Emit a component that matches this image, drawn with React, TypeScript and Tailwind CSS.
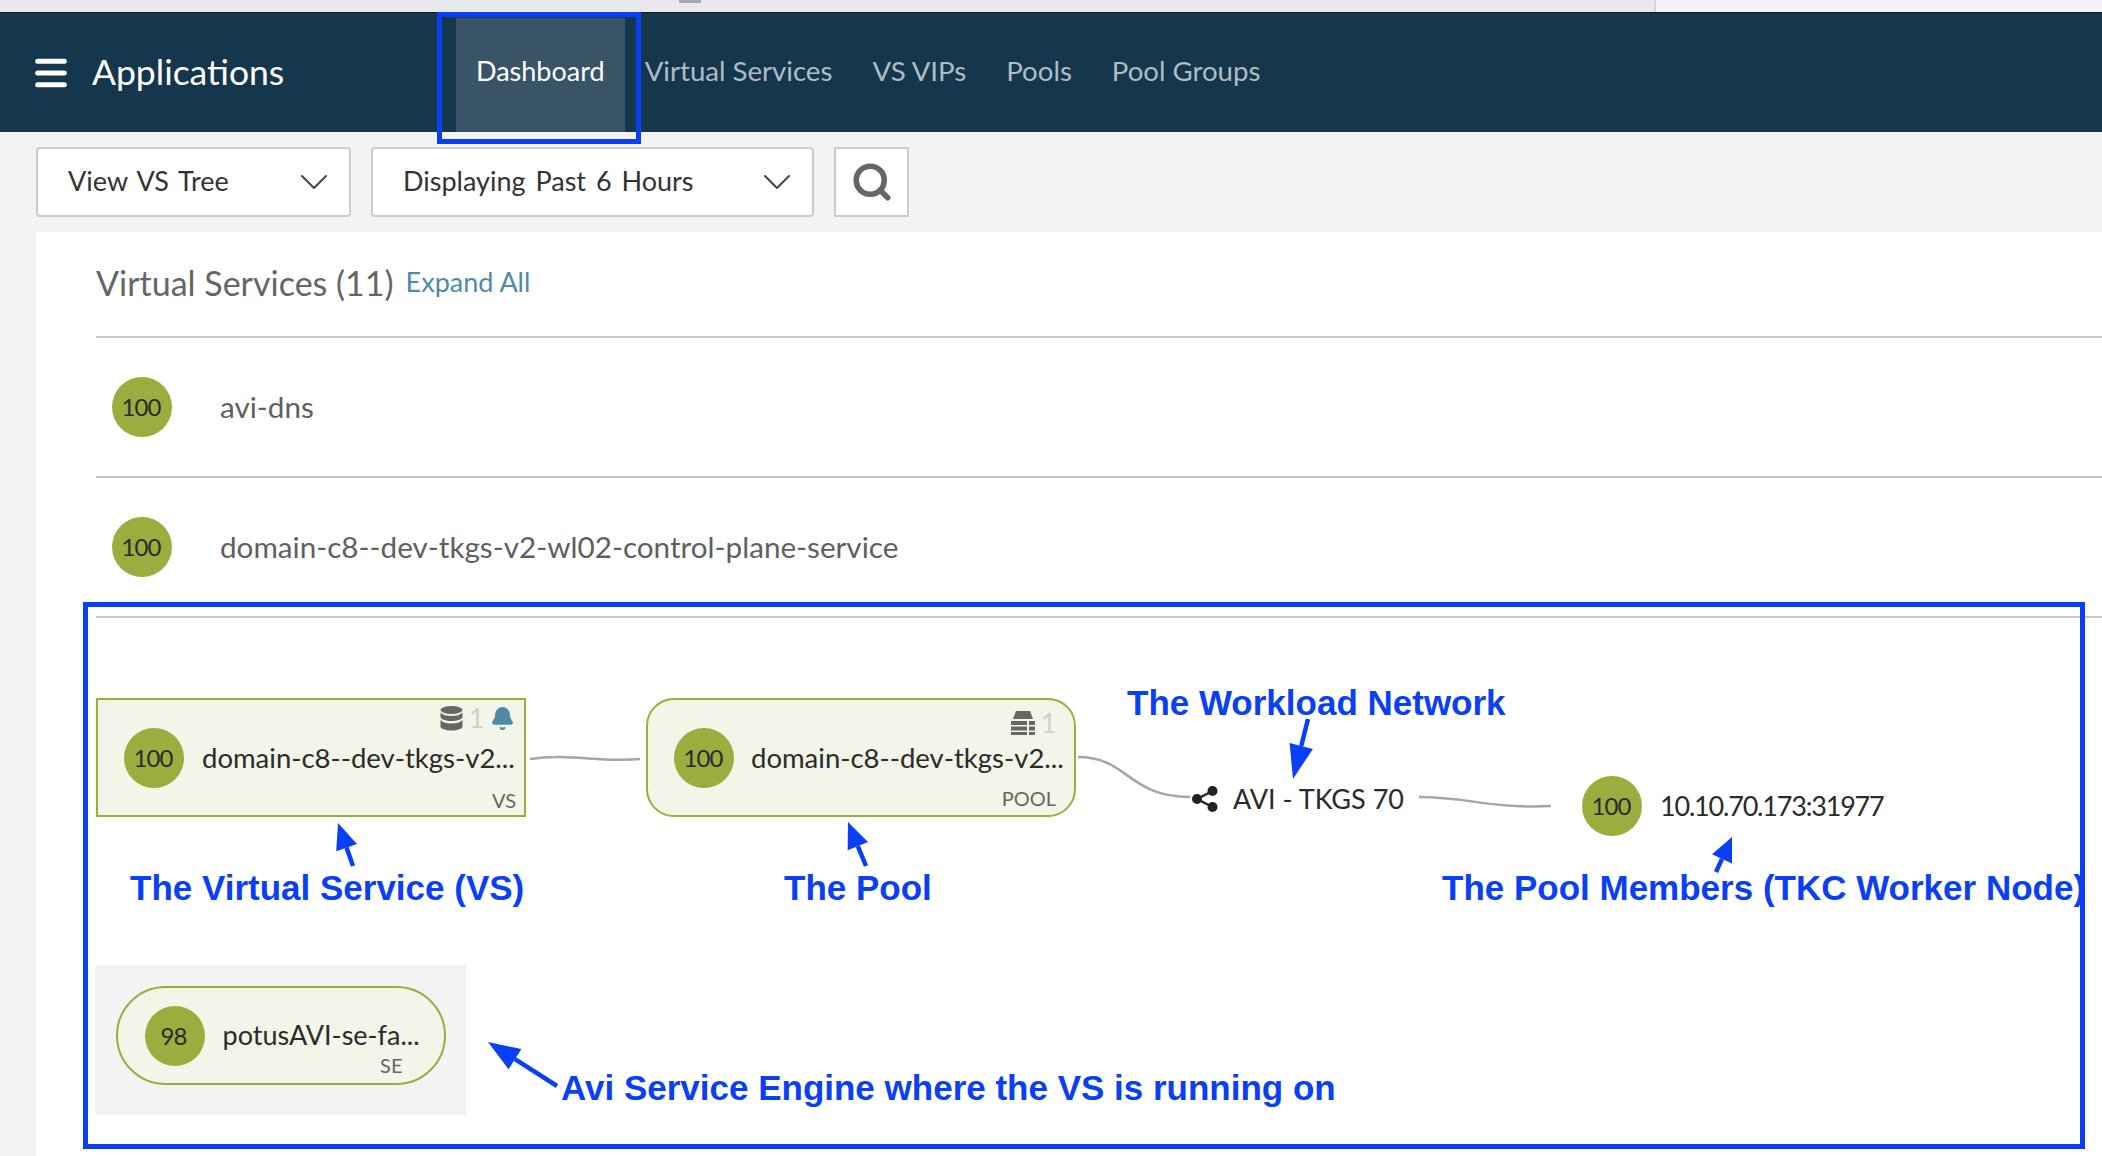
import { Menu, ChevronDown, Search, Bell } from "lucide-react";

const NAV = ["Virtual Services", "VS VIPs", "Pools", "Pool Groups"];

function Score({ value }: { value: number }) {
  return (
    <div className="flex h-[60px] w-[60px] shrink-0 items-center justify-center rounded-full bg-[#9aad3e] pr-[2px] text-[24px] tracking-[-1px] text-[#2b2b2b]">
      {value}
    </div>
  );
}

function Row({ name }: { name: string }) {
  return (
    <div className="flex h-[140px] items-center gap-12 border-b-2 border-[#c8c8c8] pl-4">
      <Score value={100} />
      <span className="text-[29.65px] text-[#5f5f5f]">{name}</span>
    </div>
  );
}

function Picker({ label, width, gap }: { label: string; width: string; gap: string }) {
  return (
    <div className={`flex h-[70px] items-center justify-between rounded border-2 border-[#cccccc] bg-white pl-[30px] pr-[11px] ${width} ${gap}`}>
      <span className="pb-[2px] text-[27px] [word-spacing:3px] text-[#333333]">{label}</span>
      <ChevronDown className="h-12 w-12 text-[#444444]" strokeWidth={1} />
    </div>
  );
}

function Database() {
  return (
    <svg width="23" height="25" viewBox="0 0 23 25" fill="#666666">
      <ellipse cx="11.5" cy="4" rx="11" ry="4" />
      <path d="M.5 6.5c2 2.400 6 3.500 11 3.500s9-1.100 11-3.500V11c0 2.200-5 4-11 4S.5 13.200.5 11z" />
      <path d="M.5 14c2 2.400 6 3.500 11 3.500s9-1.100 11-3.500v6.500c0 2.300-5 4-11 4s-11-1.700-11-4z" />
    </svg>
  );
}

function PoolIcon() {
  return (
    <svg width="24" height="24" viewBox="0 0 24 24" fill="#666666">
      <path d="M5 0h14l3 8H2z" />
      <path d="M0 10h16v4H0zM18 10h6v4h-6zM0 15.500h16v4H0zM18 15.500h6v4h-6zM0 21h16v3H0zM18 21h6v3h-6z" />
    </svg>
  );
}

function ShareIcon() {
  return (
    <svg width="26" height="26" viewBox="0 0 26 26" fill="#222222">
      <circle cx="20.500" cy="5" r="5" />
      <circle cx="5" cy="13" r="5" />
      <circle cx="20.500" cy="21" r="5" />
      <path d="M5 13 20.500 5M5 13l15.500 8" stroke="#222222" strokeWidth="2.500" />
    </svg>
  );
}

function Note({ x, y, text }: { x: string; y: string; text: string }) {
  return (
    <span className={`absolute whitespace-nowrap font-['Liberation_Sans',Arial,sans-serif] text-[35px] leading-[32px] font-bold text-[#0a40f5] ${x} ${y}`}>
      {text}
    </span>
  );
}

function Arrow({ x1, y1, x2, y2, head = 34, w = 13 }: { x1: number; y1: number; x2: number; y2: number; head?: number; w?: number }) {
  const len = Math.hypot(x2 - x1, y2 - y1);
  const ux = (x2 - x1) / len;
  const uy = (y2 - y1) / len;
  const bx = x2 - ux * head;
  const by = y2 - uy * head;
  return (
    <g>
      <line x1={x1} y1={y1} x2={bx} y2={by} stroke="#0a40f5" strokeWidth="4.500" />
      <polygon points={`${x2},${y2} ${bx - uy * w},${by + ux * w} ${bx + uy * w},${by - ux * w}`} fill="#0a40f5" />
    </g>
  );
}

export default function App() {
  return (
    <div className="relative h-[1156px] w-[2102px] overflow-hidden bg-[#f3f3f3] font-['Lato',sans-serif]">
      <div className="flex h-3 bg-[#e8e7ec]">
        <div className="ml-[679px] h-[3px] w-[22px] bg-[#a8a8b0]" />
        <div className="ml-auto w-[448px] border-l-2 border-[#d5d5d8] bg-[#f4f3f9]" />
      </div>

      <header className="flex h-[120px] items-center border-t border-[#0a1e2e] bg-[#14374d] pl-[31px]">
        <Menu className="h-10 w-10 text-white" strokeWidth={3} />
        <h1 className="ml-[21px] w-[364px] pb-[2px] text-[35.5px] text-white">Applications</h1>
        <nav className="flex h-full text-[27.6px] text-[#b0bbc3]">
          <a className="mt-[5px] flex items-center bg-[#385466] px-5 pb-[7px] text-[27px] text-white">Dashboard</a>
          {NAV.map((n) => (
            <a key={n} className="flex items-center px-5 pb-[3px]">{n}</a>
          ))}
        </nav>
      </header>

      <div className="flex h-[100px] items-start pt-[15px] pl-9">
        <Picker label="View VS Tree" width="w-[315px]" gap="mr-5" />
        <Picker label="Displaying Past 6 Hours" width="w-[443px]" gap="mr-5" />
        <div className="flex h-[70px] w-[75px] items-center justify-center border-2 border-[#cccccc] bg-white">
          <Search className="h-[42px] w-[42px] text-[#666666]" strokeWidth={3.200} />
        </div>
      </div>

      <main className="ml-9 h-[924px] bg-white pl-[60px]">
        <div className="flex h-[106px] items-center gap-3 border-b-2 border-[#c8c8c8] pb-[4px]">
          <h2 className="text-[34px] text-[#666666]">Virtual Services (11)</h2>
          <a className="text-[27px] text-[#4f8ba8]">Expand All</a>
        </div>
        <Row name="avi-dns" />
        <Row name="domain-c8--dev-tkgs-v2-wl02-control-plane-service" />

        <div className="relative h-[529px]">
          <div className="absolute top-[80px] left-0 flex h-[119px] w-[430px] items-center gap-[18px] border-2 border-[#9aad3e] bg-[#f3f5e8] pl-[26px]">
            <Score value={100} />
            <span className="text-[27.5px] text-[#2b2b2b]">domain-c8--dev-tkgs-v2...</span>
            <div className="absolute top-[5px] right-[9px] flex items-center gap-[6px] text-[26px] leading-none text-[#cfcfcf]">
              <Database />
              <span>1</span>
              <Bell className="h-[25px] w-[25px] fill-[#4f8ba8] text-[#4f8ba8]" />
            </div>
            <span className="absolute right-2 bottom-0 text-[20px] text-[#666666]">VS</span>
          </div>

          <div className="absolute top-[80px] left-[550px] flex h-[119px] w-[430px] items-center gap-[17px] rounded-[28px] border-2 border-[#9aad3e] bg-[#f3f5e8] pl-[26px]">
            <Score value={100} />
            <span className="text-[27.5px] text-[#2b2b2b]">domain-c8--dev-tkgs-v2...</span>
            <div className="absolute top-[10px] right-[18px] flex items-center gap-[6px] text-[26px] leading-none text-[#cfcfcf]">
              <PoolIcon />
              <span>1</span>
            </div>
            <span className="absolute right-[18px] bottom-[2px] text-[20px] text-[#666666]">POOL</span>
          </div>

          <div className="absolute top-[161px] left-[1096px] flex items-center gap-[15px]">
            <ShareIcon />
            <span className="text-[27px] text-[#2b2b2b]">AVI - TKGS 70</span>
          </div>

          <div className="absolute top-[158px] left-[1486px] flex items-center gap-[18px]">
            <Score value={100} />
            <span className="text-[27px] tracking-[-1.200px] text-[#2b2b2b]">10.10.70.173:31977</span>
          </div>

          <div className="absolute top-[347px] left-[-1px] flex h-[150px] w-[371px] justify-center bg-[#f3f3f3] pt-[21px]">
            <div className="relative flex h-[99px] w-[330px] items-center gap-[18px] rounded-[50px] border-2 border-[#9aad3e] bg-[#f3f5e8] pl-[27px]">
              <Score value={98} />
              <span className="text-[27px] text-[#2b2b2b]">potusAVI-se-fa...</span>
              <span className="absolute right-[41px] bottom-[3px] text-[20px] text-[#666666]">SE</span>
            </div>
          </div>
        </div>
      </main>

      <svg className="pointer-events-none absolute inset-0" width="2102" height="1156" fill="none">
        <path d="M530 759c40-6 70 4 110 0" stroke="#a6a6a6" strokeWidth="2.500" />
        <path d="M1078 757c50 0 50 40 112 40" stroke="#a6a6a6" strokeWidth="2.500" />
        <path d="M1419 797c50 0 70 12 132 9" stroke="#a6a6a6" strokeWidth="2.500" />
        <Arrow x1={353} y1={866} x2={338} y2={823} head={26} w={11} />
        <Arrow x1={866} y1={866} x2={848} y2={822} head={26} w={11} />
        <Arrow x1={1308} y1={719} x2={1293} y2={779} head={34} w={12} />
        <Arrow x1={1716} y1={872} x2={1732} y2={837} head={24} w={11} />
        <Arrow x1={557} y1={1086} x2={488} y2={1042} head={32} w={12} />
      </svg>

      <Note x="left-[1127px]" y="top-[687px]" text="The Workload Network" />
      <Note x="left-[130px]" y="top-[872px]" text="The Virtual Service (VS)" />
      <Note x="left-[784px]" y="top-[872px]" text="The Pool" />
      <Note x="left-[1442px]" y="top-[872px]" text="The Pool Members (TKC Worker Node)" />
      <Note x="left-[561px]" y="top-[1072px]" text="Avi Service Engine where the VS is running on" />

      <div className="pointer-events-none absolute top-3 left-[437px] h-[132px] w-[204px] border-[5px] border-[#0a40f5]" />
      <div className="pointer-events-none absolute top-[602px] left-[83px] h-[547px] w-[2002px] border-[5px] border-[#0a40f5]" />
    </div>
  );
}
